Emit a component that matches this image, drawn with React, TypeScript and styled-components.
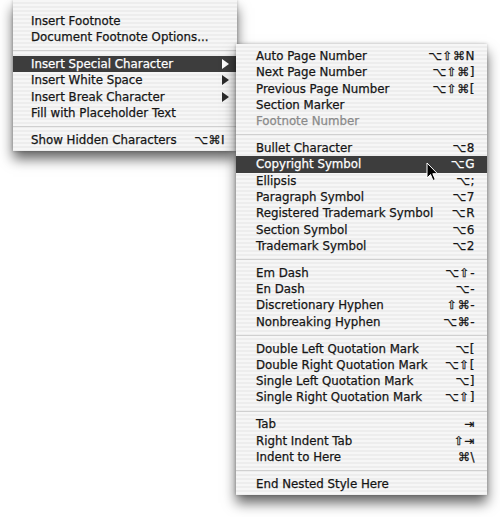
import React from 'react';
import styled, { createGlobalStyle } from 'styled-components';

type Entry =
  | { label: string; shortcut?: string; disabled?: boolean; selected?: boolean; submenu?: boolean }
  | 'sep';

const mainItems: Entry[] = [
  { label: 'Insert Footnote' },
  { label: 'Document Footnote Options...' },
  'sep',
  { label: 'Insert Special Character', submenu: true, selected: true },
  { label: 'Insert White Space', submenu: true },
  { label: 'Insert Break Character', submenu: true },
  { label: 'Fill with Placeholder Text' },
  'sep',
  { label: 'Show Hidden Characters', shortcut: '⌥⌘I' },
];

const subItems: Entry[] = [
  { label: 'Auto Page Number', shortcut: '⌥⇧⌘N' },
  { label: 'Next Page Number', shortcut: '⌥⇧⌘]' },
  { label: 'Previous Page Number', shortcut: '⌥⇧⌘[' },
  { label: 'Section Marker' },
  { label: 'Footnote Number', disabled: true },
  'sep',
  { label: 'Bullet Character', shortcut: '⌥8' },
  { label: 'Copyright Symbol', shortcut: '⌥G', selected: true },
  { label: 'Ellipsis', shortcut: '⌥;' },
  { label: 'Paragraph Symbol', shortcut: '⌥7' },
  { label: 'Registered Trademark Symbol', shortcut: '⌥R' },
  { label: 'Section Symbol', shortcut: '⌥6' },
  { label: 'Trademark Symbol', shortcut: '⌥2' },
  'sep',
  { label: 'Em Dash', shortcut: '⌥⇧-' },
  { label: 'En Dash', shortcut: '⌥-' },
  { label: 'Discretionary Hyphen', shortcut: '⇧⌘-' },
  { label: 'Nonbreaking Hyphen', shortcut: '⌥⌘-' },
  'sep',
  { label: 'Double Left Quotation Mark', shortcut: '⌥[' },
  { label: 'Double Right Quotation Mark', shortcut: '⌥⇧[' },
  { label: 'Single Left Quotation Mark', shortcut: '⌥]' },
  { label: 'Single Right Quotation Mark', shortcut: '⌥⇧]' },
  'sep',
  { label: 'Tab', shortcut: '⇥' },
  { label: 'Right Indent Tab', shortcut: '⇧⇥' },
  { label: 'Indent to Here', shortcut: '⌘\\' },
  'sep',
  { label: 'End Nested Style Here' },
];

const GlobalStyle = createGlobalStyle`
  html, body {
    margin: 0;
    padding: 0;
    background: #ffffff;
  }
  body {
    font-family: "DejaVu Sans", "Liberation Sans", sans-serif;
  }
`;

const Stage = styled.div`
  position: relative;
  width: 500px;
  height: 517px;
  overflow: hidden;
  padding-left: 13px;
  box-sizing: border-box;
`;

const Menu = styled.div<{ $width: number; $padTop: number }>`
  width: ${({ $width }) => $width}px;
  padding: ${({ $padTop }) => $padTop}px 0 3px 0;
  box-sizing: border-box;
  background: repeating-linear-gradient(
    to bottom,
    #f6f6f6 0px,
    #f6f6f6 2px,
    #ededed 2px,
    #ededed 4px
  );
  box-shadow: 0 8px 12px rgba(0, 0, 0, 0.6), 0 0 3px rgba(0, 0, 0, 0.25);
`;

const SubMenu = styled(Menu)`
  position: absolute;
  left: 236px;
  top: 44px;
`;

const Row = styled.div<{ $selected?: boolean; $disabled?: boolean; $padLeft: number }>`
  display: flex;
  align-items: center;
  justify-content: space-between;
  height: 16.3px;
  padding: 0 12px 0 ${({ $padLeft }) => $padLeft}px;
  font-size: 11.8px;
  white-space: nowrap;
  -webkit-text-stroke: 0.25px currentColor;
  color: ${({ $selected, $disabled }) =>
    $selected ? '#ffffff' : $disabled ? '#8a8a8a' : '#151515'};
  background: ${({ $selected }) => ($selected ? '#3d3d3d' : 'transparent')};
`;

const Shortcut = styled.span`
  font-size: 12px;
  letter-spacing: 0.5px;
`;

const Arrow = styled.span<{ $light?: boolean }>`
  width: 0;
  height: 0;
  margin-right: -4px;
  border-top: 5px solid transparent;
  border-bottom: 5px solid transparent;
  border-left: 7px solid ${({ $light }) => ($light ? '#ffffff' : '#2a2a2a')};
`;

const Separator = styled.div`
  height: 1px;
  margin: 5px 0 4.6px 0;
  background: #d0d0d0;
`;

const Pointer = styled.svg`
  position: absolute;
  left: 426px;
  top: 162px;
`;

const renderEntries = (entries: Entry[], padLeft: number) =>
  entries.map((e, i) =>
    e === 'sep' ? (
      <Separator key={i} />
    ) : (
      <Row key={i} $selected={e.selected} $disabled={e.disabled} $padLeft={padLeft}>
        <span>{e.label}</span>
        {e.shortcut && <Shortcut>{e.shortcut}</Shortcut>}
        {e.submenu && <Arrow $light={e.selected} />}
      </Row>
    ),
  );

const App = () => (
  <>
    <GlobalStyle />
    <Stage>
      <Menu $width={224} $padTop={12.85}>
        {renderEntries(mainItems, 18)}
      </Menu>
      <SubMenu $width={251} $padTop={3.85}>
        {renderEntries(subItems, 20)}
      </SubMenu>
      <Pointer width="13" height="20" viewBox="0 0 13 20">
        <path
          d="M1 1 L1 16 L4.5 12.5 L7 18.5 L9.3 17.5 L6.8 11.7 L11.5 11.7 Z"
          fill="#000000"
          stroke="#ffffff"
          strokeWidth="1"
          strokeLinejoin="round"
        />
      </Pointer>
    </Stage>
  </>
);

export default App;
